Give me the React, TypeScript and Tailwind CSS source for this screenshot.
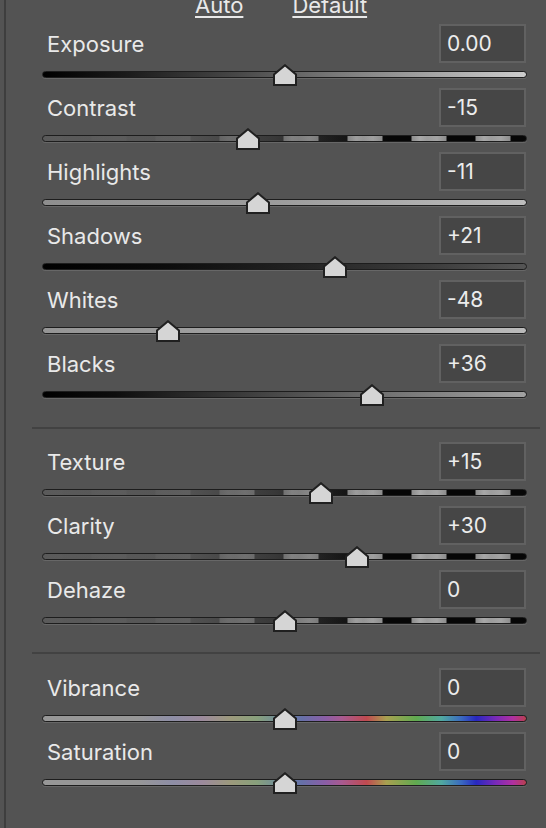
import React from "react";

const TRACK_W = 485;

const grey = {
  exposure:
    "bg-[linear-gradient(to_right,#000_0%,#1c1c1c_18%,#474747_40%,#7c7c7c_62%,#a8a8a8_82%,#cdcdcd_100%)]",
  highlights: "bg-[linear-gradient(to_right,#8e8e8e_0%,#9d9d9d_50%,#bdbdbd_100%)]",
  shadows: "bg-[linear-gradient(to_right,#000_0%,#0c0c0c_25%,#202020_50%,#3c3c3c_80%,#555_100%)]",
  whites: "bg-[linear-gradient(to_right,#959595_0%,#a2a2a2_50%,#bababa_100%)]",
  blacks:
    "bg-[linear-gradient(to_right,#000_0%,#0e0e0e_15%,#363636_38%,#676767_65%,#8e8e8e_88%,#a2a2a2_100%)]",
  stripes:
    "bg-[image:linear-gradient(to_right,#5a5a5a_0%,rgba(90,90,90,0.95)_28%,rgba(90,90,90,0.6)_48%,rgba(90,90,90,0.2)_62%,rgba(90,90,90,0)_72%),repeating-linear-gradient(to_right,#9c9c9c_0px,#a4a4a4_10px,#8e8e8e_19px,#060606_20px,#060606_48px,#8e8e8e_49px,#a8a8a8_57px,#9c9c9c_64px)]",
  color:
    "bg-[linear-gradient(to_right,#979797_0%,#979797_19.6%,#8e8ea6_26.8%,#9c8a9c_33%,#9c9a7c_39%,#88a07c_44.3%,#6a88a2_50%,#6670a8_53.6%,#8a5ea6_58.4%,#a85a90_61.9%,#c04a50_67%,#a8a050_71.1%,#60aa50_77.3%,#50a8a0_82.5%,#3a6ac0_86.6%,#2828c0_89.7%,#7a2ab8_93.8%,#b030a0_97.3%,#b84050_100%)]",
};

type Item = { label: string; value: string; num: number; track: string };

const sections: Item[][] = [
  [
    { label: "Exposure", value: "0.00", num: 0, track: grey.exposure },
    { label: "Contrast", value: "-15", num: -15, track: grey.stripes },
    { label: "Highlights", value: "-11", num: -11, track: grey.highlights },
    { label: "Shadows", value: "+21", num: 21, track: grey.shadows },
    { label: "Whites", value: "-48", num: -48, track: grey.whites },
    { label: "Blacks", value: "+36", num: 36, track: grey.blacks },
  ],
  [
    { label: "Texture", value: "+15", num: 15, track: grey.stripes },
    { label: "Clarity", value: "+30", num: 30, track: grey.stripes },
    { label: "Dehaze", value: "0", num: 0, track: grey.stripes },
  ],
  [
    { label: "Vibrance", value: "0", num: 0, track: grey.color },
    { label: "Saturation", value: "0", num: 0, track: grey.color },
  ],
];

function Thumb({ left }: { left: number }) {
  return (
    <svg
      className="absolute top-[-8px]"
      style={{ left }}
      width="24"
      height="22"
      viewBox="0 0 24 22"
    >
      <polygon
        points="12,1.2 23,10.5 23,21 1,21 1,10.5"
        fill="#d5d5d5"
        stroke="#202020"
        strokeWidth="2"
        strokeLinejoin="miter"
      />
    </svg>
  );
}

function SliderRow({ item }: { item: Item }) {
  const pos = ((item.num + 100) / 200) * TRACK_W;
  return (
    <div className="h-[64px] pl-[36px] pr-[19px]">
      <div className="flex h-[39px] items-center justify-between pl-[5px] pr-[1px]">
        <span className="translate-y-[1px] text-[22px] text-[#e9e9e9]">{item.label}</span>
        <div className="flex h-[39px] w-[87px] items-center border-2 border-[#616161] bg-[#464646] pl-[6px] text-[21px] text-[#ececec]">
          {item.value}
        </div>
      </div>
      <div
        className={`relative mt-[8px] h-[7px] rounded-full border border-[#1d1d1d] shadow-[0_1px_0_rgba(255,255,255,0.12)] ${item.track}`}
      >
        <Thumb left={pos - 13} />
      </div>
    </div>
  );
}

export default function App() {
  return (
    <div className="flex h-[828px] w-[546px] overflow-hidden bg-[#535353] font-['Inter','Liberation_Sans',sans-serif]">
      <div className="w-[4px]" />
      <div className="w-[2px] bg-[#3e3e3e]" />
      <div className="flex flex-1 flex-col">
        <div className="-mt-[7px] mb-[7px] flex h-[24px] gap-[49px] pl-[189px] text-[22px] leading-[24px] text-[#e9e9e9]">
          <span className="underline decoration-[1.5px] underline-offset-[3px]">Auto</span>
          <span className="underline decoration-[1.5px] underline-offset-[3px]">Default</span>
        </div>

        {sections[0].map((it) => (
          <SliderRow key={it.label} item={it} />
        ))}

        <div className="ml-[26px] mr-[6px] mt-[19px] mb-[13px] h-[2px] bg-[#424242]" />

        {sections[1].map((it) => (
          <SliderRow key={it.label} item={it} />
        ))}

        <div className="ml-[26px] mr-[6px] mt-[18px] mb-[14px] h-[2px] bg-[#424242]" />

        {sections[2].map((it) => (
          <SliderRow key={it.label} item={it} />
        ))}
      </div>
    </div>
  );
}
